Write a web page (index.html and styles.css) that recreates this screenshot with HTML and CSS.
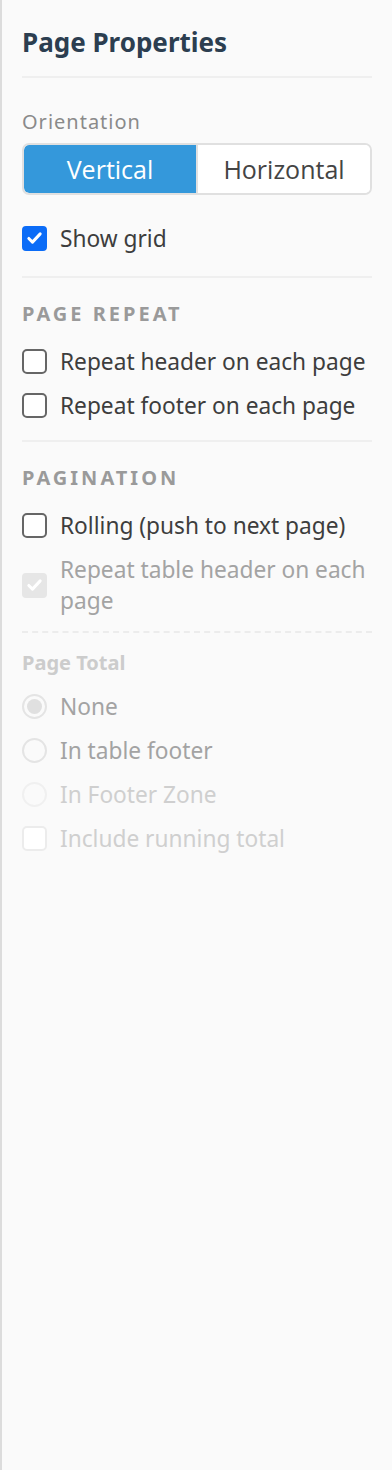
FILE: index.html
```html
<!DOCTYPE html>
<html lang="en">
<head>
    <meta charset="UTF-8">
    <meta name="viewport" content="width=device-width, initial-scale=1.0">
    <title>Page Properties</title>
    <link rel="stylesheet" href="styles.css">
</head>
<body>
    <aside class="panel">
        <h3 class="title">Page Properties</h3>

        <section class="group first">
            <div class="label">Orientation</div>
            <div class="segment">
                <button class="seg on">Vertical</button>
                <button class="seg">Horizontal</button>
            </div>
            <label class="row gap-top">
                <span class="box checked">
                    <svg viewBox="0 0 24 24"><path d="M5.5 12.5l4.2 4.2 8.8-9.4"/></svg>
                </span>
                <span class="text">Show grid</span>
            </label>
        </section>

        <section class="group">
            <div class="heading">Page Repeat</div>
            <label class="row"><span class="box"></span><span class="text">Repeat header on each page</span></label>
            <label class="row"><span class="box"></span><span class="text">Repeat footer on each page</span></label>
        </section>

        <section class="group">
            <div class="heading">Pagination</div>
            <label class="row"><span class="box"></span><span class="text">Rolling (push to next page)</span></label>
            <label class="row wrap disabled">
                <span class="box checked muted">
                    <svg viewBox="0 0 24 24"><path d="M5.5 12.5l4.2 4.2 8.8-9.4"/></svg>
                </span>
                <span class="text">Repeat table header on each page</span>
            </label>
        </section>

        <section class="group dashed">
            <div class="subhead">Page Total</div>
            <label class="row disabled"><span class="radio picked"></span><span class="text">None</span></label>
            <label class="row disabled"><span class="radio"></span><span class="text">In table footer</span></label>
            <label class="row off"><span class="radio"></span><span class="text">In Footer Zone</span></label>
            <label class="row off"><span class="box faint"></span><span class="text">Include running total</span></label>
        </section>
    </aside>
</body>
</html>
```

FILE: styles.css
```css
* {
    box-sizing: border-box;
}

body {
    margin: 0;
    background: #fafafa;
    font-family: "Noto Sans", "Open Sans", sans-serif;
}

.panel {
    min-height: 1470px;
    border-left: 2px solid #dcdcdc;
    padding: 26px 20px 0 20px;
}

.title {
    margin: 0;
    font-size: 26px;
    line-height: 32px;
    font-weight: 700;
    color: #2c3e50;
    padding-bottom: 18px;
    border-bottom: 2px solid #efefef;
}

.group {
    border-bottom: 2px solid #efefef;
    padding: 24px 0 13px;
}
.group.first {
    padding-top: 32px;
    padding-bottom: 16px;
}
.group.dashed {
    border-top: 2px dashed #ececec;
    border-bottom: none;
    margin-top: -1px;
    padding-top: 18px;
}
/* the group above the dashed one has a shorter bottom */
.group:nth-of-type(3) {
    border-bottom: none;
    padding-bottom: 9px;
}

.label {
    font-size: 20px;
    line-height: 24px;
    color: #8a8a8a;
    letter-spacing: 1px;
}

.heading {
    font-size: 20px;
    line-height: 24px;
    font-weight: 700;
    color: #9a9a9a;
    text-transform: uppercase;
    letter-spacing: 3px;
    margin-bottom: 13px;
}

.subhead {
    font-size: 20px;
    line-height: 24px;
    font-weight: 700;
    color: #cccccc;
    margin-bottom: 9px;
}

.segment {
    display: flex;
    margin-top: 9px;
    height: 52px;
    border: 2px solid #e0e0e0;
    border-radius: 7px;
    overflow: hidden;
    background: #fff;
}
.seg {
    flex: 1;
    border: none;
    background: #fff;
    font-family: "Open Sans", sans-serif;
    font-size: 25px;
    color: #444;
    padding: 0;
}
.seg + .seg {
    border-left: 2px solid #e0e0e0;
}
.seg.on {
    background: #3498db;
    color: #fff;
    border-radius: 5px 0 0 5px;
}

.row {
    display: flex;
    align-items: center;
    gap: 13px;
    min-height: 44px;
    font-size: 22.7px;
    color: #3d3d3d;
}
.row.gap-top {
    margin-top: 21px;
}
.row.wrap {
    padding: 7px 0;
}
.row.wrap .text {
    line-height: 31px;
}
.row.disabled {
    color: #a3a3a3;
}
.row.off {
    color: #cfcfcf;
}

.box {
    flex-shrink: 0;
    width: 25px;
    height: 25px;
    border: 2px solid #666;
    border-radius: 5px;
    background: #fff;
    display: flex;
    align-items: center;
    justify-content: center;
}
.box svg {
    width: 22px;
    height: 22px;
    fill: none;
    stroke: #fff;
    stroke-width: 3.4;
    stroke-linecap: round;
    stroke-linejoin: round;
}
.box.checked {
    background: #0b6cf7;
    border-color: #0b6cf7;
    border-radius: 4px;
}
.box.muted {
    background: #e6e6e6;
    border-color: #e6e6e6;
}
.box.faint {
    border-color: #ececec;
}

.radio {
    flex-shrink: 0;
    width: 25px;
    height: 25px;
    border: 2px solid #e4e4e4;
    border-radius: 50%;
    background: #fafafa;
    display: flex;
    align-items: center;
    justify-content: center;
}
.radio.picked::after {
    content: "";
    width: 15px;
    height: 15px;
    border-radius: 50%;
    background: #e0e0e0;
}
.row.off .radio {
    border-color: #f0f0f0;
}
```
